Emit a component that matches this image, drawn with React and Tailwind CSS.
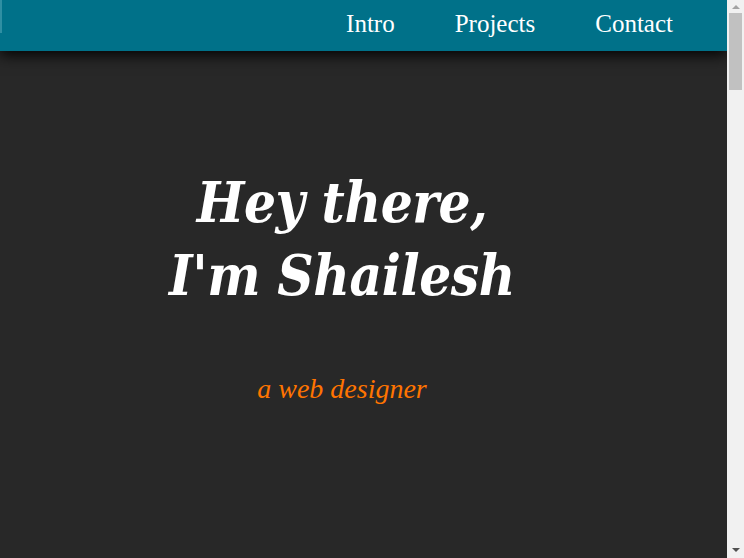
import React from 'react'

const links = ['Intro', 'Projects', 'Contact']

const App = () => {
    return (
        <div className="flex h-screen overflow-hidden bg-[#282828]">
            <div className="min-h-[3800px] flex-1">
                {/*导航*/}
                <nav className="relative z-10 flex h-[51px] items-start justify-between bg-[#007189] shadow-[0_4px_14px_rgba(0,0,0,0.95)]">
                    <div className="h-[33px] w-[2px] bg-[#2f8fa3]"></div>
                    <ul className="flex gap-[60px] pr-[54px] pt-[5px] font-['Liberation_Serif',serif] text-[25px] text-white">
                        {links.map((l) => (
                            <li key={l}><a href="#">{l}</a></li>
                        ))}
                    </ul>
                </nav>
                {/*主页*/}
                <section className="w-[684px] pt-[115px] text-center">
                    <h1 className="font-['DejaVu_Serif',serif] font-stretch-condensed text-[56px] font-bold italic leading-[73px] tracking-[-0.4px] text-white">
                        Hey there,<br/>I'm Shailesh
                    </h1>
                    <p className="mt-[56px] font-['Liberation_Serif',serif] text-[28px] italic text-[#ff7400]">a web designer</p>
                </section>
            </div>
            {/*滚动条*/}
            <div className="relative z-20 flex h-full w-[17px] shrink-0 flex-col items-center bg-[#f1f1f1]">
                <div className="flex h-[13px] items-center justify-center">
                    <div className="h-0 w-0 border-x-[4px] border-b-[4px] border-x-transparent border-b-[#a3a3a3]"></div>
                </div>
                <div className="h-[77px] w-[13px] bg-[#c1c1c1]"></div>
                <div className="flex-1"></div>
                <div className="flex h-[17px] items-center justify-center">
                    <div className="h-0 w-0 border-x-[4px] border-t-[4px] border-x-transparent border-t-[#505050]"></div>
                </div>
            </div>
        </div>
    )
}

export default App
